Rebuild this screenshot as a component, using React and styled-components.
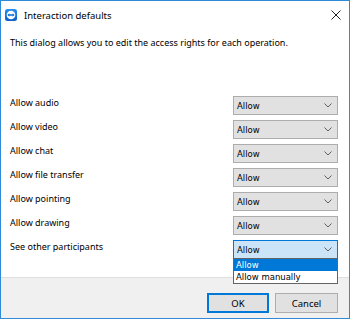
import React from "react";
import styled, { createGlobalStyle } from "styled-components";

const Global = createGlobalStyle`
  html, body { margin: 0; padding: 0; background: #ffffff; }
  body { font-family: "Noto Sans", "Open Sans", sans-serif; }
`;

const Window = styled.div`
  box-sizing: border-box;
  width: 350px;
  height: 319px;
  border: 1px solid #2f8bd8;
  display: flex;
  flex-direction: column;
  background: #ffffff;
  font-size: 9px;
  color: #000;
  position: relative;
`;

const TitleBar = styled.div`
  height: 28px;
  display: flex;
  align-items: center;
  padding: 0 8px 0 4px;
  flex-shrink: 0;
`;

const TitleText = styled.span`
  margin-left: 7px;
  font-size: 9.5px;
  flex: 1;
`;

const Close = styled.div`
  width: 10px;
  height: 10px;
  display: flex;
`;

const Body = styled.div`
  flex: 1;
  display: flex;
  flex-direction: column;
  padding: 7px 11px 0 9px;
`;

const Description = styled.div`
  line-height: 14px;
  margin-bottom: 46px;
`;

const Rows = styled.div`
  display: flex;
  flex-direction: column;
`;

const Row = styled.div`
  height: 24px;
  display: flex;
  justify-content: space-between;
  align-items: flex-start;
`;

const Label = styled.span`
  line-height: 14px;
`;

const Combo = styled.div`
  box-sizing: border-box;
  width: 105px;
  height: 19px;
  border: 1px solid ${(p) => (p.$open ? "#0078d7" : "#adadad")};
  background: ${(p) => (p.$open ? "#cce4f7" : "#e1e1e1")};
  display: flex;
  align-items: center;
  justify-content: space-between;
  padding: 0 5px 0 3px;
  position: relative;
  font-family: Tahoma, "DejaVu Sans", sans-serif;
  font-size: 8.5px;
`;

const List = styled.div`
  position: absolute;
  left: -1px;
  top: 17px;
  width: 105px;
  box-sizing: border-box;
  border: 1px solid #646464;
  background: #fff;
  z-index: 2;
`;

const Item = styled.div`
  height: 12px;
  line-height: 12px;
  padding-left: 2px;
  background: ${(p) => (p.$sel ? "#0078d7" : "#fff")};
  color: ${(p) => (p.$sel ? "#fff" : "#000")};
`;

const Footer = styled.div`
  height: 41px;
  flex-shrink: 0;
  box-sizing: border-box;
  border-top: 1px solid #dfdfdf;
  background: #f0f0f0;
  display: flex;
  justify-content: flex-end;
  align-items: flex-start;
  gap: 6px;
  padding: 15px 11px 0 0;
`;

const Button = styled.div`
  box-sizing: border-box;
  width: ${(p) => (p.$w ? p.$w : 62)}px;
  height: 20px;
  background: #e1e1e1;
  border: ${(p) => (p.$default ? "2px solid #0078d7" : "1px solid #adadad")};
  display: flex;
  align-items: center;
  justify-content: center;
  font-size: 9.5px;
`;

const Chevron = () => (
  <svg width="8" height="5" viewBox="0 0 8 5">
    <path d="M0.5 0.5 L4 4 L7.5 0.5" fill="none" stroke="#606060" strokeWidth="1" />
  </svg>
);

const Logo = () => (
  <svg width="12" height="12" viewBox="0 0 12 12">
    <defs>
      <linearGradient id="tvg" x1="0" y1="0" x2="0" y2="1">
        <stop offset="0" stopColor="#2a8ef0" />
        <stop offset="1" stopColor="#0c5fc4" />
      </linearGradient>
    </defs>
    <rect x="0" y="0" width="12" height="12" rx="2.5" fill="url(#tvg)" />
    <circle cx="6" cy="6" r="4.3" fill="#fff" />
    <path d="M2.4 6 L4.3 4.2 L4.3 5.3 L7.7 5.3 L7.7 4.2 L9.6 6 L7.7 7.8 L7.7 6.7 L4.3 6.7 L4.3 7.8 Z" fill="#0e6fd6" />
  </svg>
);

const rows = [
  "Allow audio",
  "Allow video",
  "Allow chat",
  "Allow file transfer",
  "Allow pointing",
  "Allow drawing",
  "See other participants",
];

export default function App() {
  return (
    <>
      <Global />
      <Window>
        <TitleBar>
          <Logo />
          <TitleText>Interaction defaults</TitleText>
          <Close>
            <svg width="10" height="10" viewBox="0 0 10 10">
              <path d="M0.5 0.5 L9.5 9.5 M9.5 0.5 L0.5 9.5" stroke="#222" strokeWidth="1" />
            </svg>
          </Close>
        </TitleBar>
        <Body>
          <Description>This dialog allows you to edit the access rights for each operation.</Description>
          <Rows>
            {rows.map((r, i) => {
              const open = i === rows.length - 1;
              return (
                <Row key={r}>
                  <Label>{r}</Label>
                  <Combo $open={open}>
                    <span>Allow</span>
                    <Chevron />
                    {open && (
                      <List>
                        <Item $sel>Allow</Item>
                        <Item>Allow manually</Item>
                      </List>
                    )}
                  </Combo>
                </Row>
              );
            })}
          </Rows>
        </Body>
        <Footer>
          <Button $default>OK</Button>
          <Button $w={63}>Cancel</Button>
        </Footer>
      </Window>
    </>
  );
}
